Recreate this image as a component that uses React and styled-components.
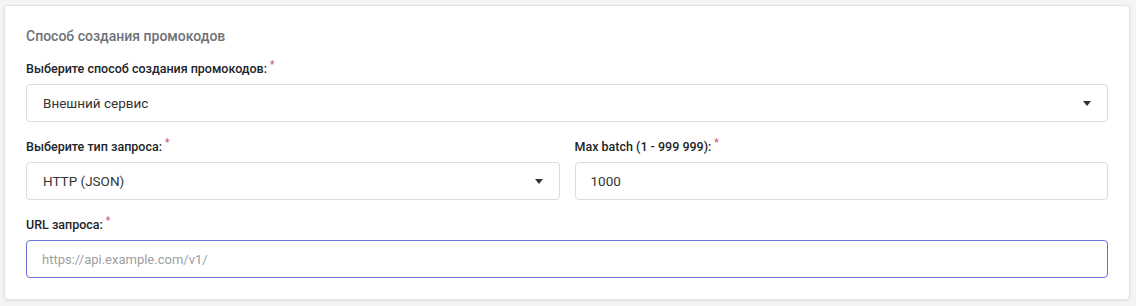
import styled, { createGlobalStyle } from "styled-components";

const GlobalStyle = createGlobalStyle`
  html, body {
    margin: 0;
    padding: 0;
    background: #f4f4f4;
  }
  * {
    box-sizing: border-box;
  }
`;

const Page = styled.div`
  padding: 5px 6px 7px 4px;
  font-family: "Roboto", "Liberation Sans", sans-serif;
`;

const Card = styled.div`
  background: #ffffff;
  border: 1px solid #e3e3e3;
  border-radius: 4px;
  box-shadow: 0 1px 3px rgba(0, 0, 0, 0.08);
  padding: 20px 21px 21px 21px;
`;

const Title = styled.h3`
  margin: 0 0 13px;
  font-size: 14px;
  line-height: 20px;
  font-weight: 500;
  color: #6e7278;
`;

const Group = styled.div`
  margin-bottom: ${(p) => (p.last ? "0" : "15px")};
`;

const Row = styled.div`
  display: grid;
  grid-template-columns: 1fr 1fr;
  gap: 15px;
`;

const Label = styled.label`
  display: block;
  font-size: 12.5px;
  line-height: 19px;
  font-weight: 500;
  color: #222529;
  margin-bottom: 6px;
`;

const Req = styled.span`
  display: inline-block;
  vertical-align: top;
  line-height: 11px;
  color: #c9606e;
  font-size: 10px;
  margin-left: 3px;
`;

const SelectBox = styled.div`
  display: flex;
  align-items: center;
  justify-content: space-between;
  height: 38px;
  padding: 0 16px;
  border: 1px solid #dcdcdc;
  border-radius: 4px;
  background: #fff;
  font-size: 13.5px;
  color: #333;
`;

const Caret = styled.span`
  width: 0;
  height: 0;
  border-left: 4px solid transparent;
  border-right: 4px solid transparent;
  border-top: 5px solid #333;
`;

const Input = styled.input`
  display: block;
  width: 100%;
  height: 38px;
  padding: 0 15px;
  border: 1px solid ${(p) => (p.focused ? "#6b70d4" : "#dcdcdc")};
  border-radius: 4px;
  background: #fff;
  font-family: inherit;
  font-size: 13.5px;
  color: #333;
  outline: none;
  caret-color: #111;

  &::placeholder {
    color: #a0a0a0;
    font-size: 13px;
  }
`;

const Field = ({ label, children }) => (
  <div>
    <Label>
      {label}
      <Req>*</Req>
    </Label>
    {children}
  </div>
);

const App = () => (
  <>
    <GlobalStyle />
    <Page>
      <Card>
        <Title>Способ создания промокодов</Title>
        <Group>
          <Field label="Выберите способ создания промокодов:">
            <SelectBox>
              Внешний сервис
              <Caret />
            </SelectBox>
          </Field>
        </Group>
        <Group>
          <Row>
            <Field label="Выберите тип запроса:">
              <SelectBox>
                HTTP (JSON)
                <Caret />
              </SelectBox>
            </Field>
            <Field label="Max batch (1 - 999 999):">
              <Input defaultValue="1000" />
            </Field>
          </Row>
        </Group>
        <Group last>
          <Field label="URL запроса:">
            <Input focused autoFocus placeholder="https://api.example.com/v1/" />
          </Field>
        </Group>
      </Card>
    </Page>
  </>
);

export default App;
